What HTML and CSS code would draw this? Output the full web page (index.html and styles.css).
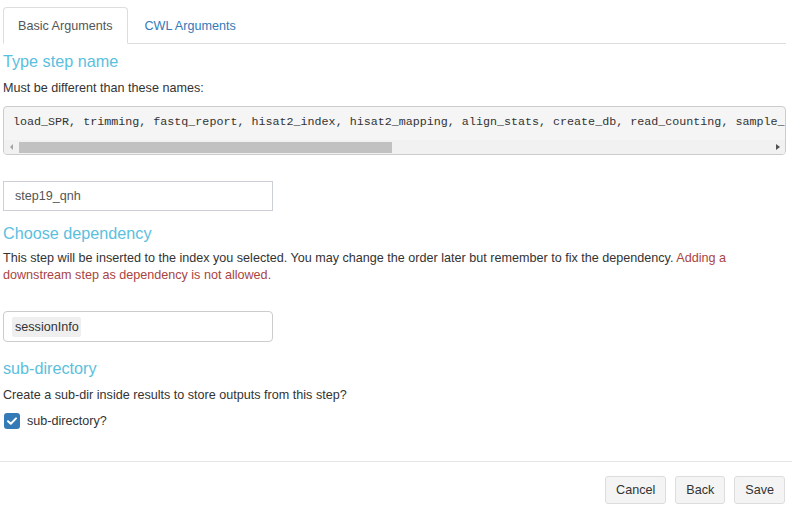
FILE: index.html
```html
<!DOCTYPE html>
<html>
<head>
<meta charset="utf-8">
<link rel="stylesheet" href="styles.css">
</head>
<body>
<div class="content">
  <ul class="tabs">
    <li class="tab active">Basic Arguments</li>
    <li class="tab">CWL Arguments</li>
  </ul>
  <h4 class="heading h-first">Type step name</h4>
  <p class="text">Must be different than these names:</p>
  <div class="pre-box">
    <pre class="names">load_SPR, trimming, fastq_report, hisat2_index, hisat2_mapping, align_stats, create_db, read_counting, sample_tree, run_edgeR, custom_step, sessionInfo</pre>
    <div class="hscroll">
      <span class="sb-btn"><span class="tri-left"></span></span>
      <span class="sb-track"><span class="sb-thumb" style="width:373px"></span></span>
      <span class="sb-btn"><span class="tri-right"></span></span>
    </div>
  </div>
  <div class="input">step19_qnh</div>
  <h4 class="heading h-dep">Choose dependency</h4>
  <p class="text two">This step will be inserted to the index you selected. You may change the order later but remember to fix the dependency. <span class="danger">Adding a downstream step as dependency is not allowed.</span></p>
  <div class="select"><span class="chip">sessionInfo</span></div>
  <h4 class="heading h-sub">sub-directory</h4>
  <p class="text">Create a sub-dir inside results to store outputs from this step?</p>
  <label class="check">
    <span class="box"><svg width="10" height="8" viewBox="0 0 10 8"><path d="M1 4.2 L3.8 6.8 L9 1.4" fill="none" stroke="#fff" stroke-width="2" stroke-linecap="round" stroke-linejoin="round"/></svg></span>
    <span class="check-label">sub-directory?</span>
  </label>
</div>
<div class="footer">
  <button class="btn">Cancel</button>
  <button class="btn">Back</button>
  <button class="btn">Save</button>
</div>
</body>
</html>
```
FILE: styles.css
```css
html, body {
  margin: 0;
  padding: 0;
  background: #fff;
}
body {
  font-family: "Liberation Sans", Arial, sans-serif;
  font-size: 12.6px;
  color: #333;
  width: 792px;
  height: 515px;
  overflow: hidden;
}
.content {
  padding: 0 6px 0 3px;
}
.tabs {
  list-style: none;
  margin: 7px 0 0;
  padding: 0;
  display: flex;
  border-bottom: 1px solid #ddd;
}
.tab {
  padding: 9px 14px 8px;
  line-height: 18px;
  margin-right: 2px;
  margin-bottom: -1px;
  border: 1px solid transparent;
  border-radius: 4px 4px 0 0;
  color: #337ab7;
}
.tab.active {
  color: #555;
  background: #fff;
  border-color: #ddd;
  border-bottom-color: transparent;
}
.heading {
  margin: 0 0 7px;
  font-size: 16.2px;
  font-weight: normal;
  line-height: 19px;
  color: #5bc0de;
}
.h-first { margin-top: 8px; margin-bottom: 9px; }
.h-dep { margin-top: 13px; }
.h-sub { margin-top: 17px; margin-bottom: 9px; }
.text {
  margin: 0 0 9px;
  line-height: 17px;
}
.text.two { margin-bottom: 27px; }
.danger { color: #a94442; }
.pre-box {
  border: 1px solid #ccc;
  border-radius: 4px;
  background: #f5f5f5;
  overflow: hidden;
  margin-top: 1px;
}
.names {
  margin: 0;
  padding: 7px 9px 9px;
  font-family: "Liberation Mono", "Courier New", monospace;
  font-size: 11.7px;
  line-height: 17px;
  color: #333;
  white-space: pre;
  overflow: hidden;
}
.hscroll {
  display: flex;
  align-items: center;
  height: 14px;
  background: #f1f1f1;
}
.sb-btn {
  width: 15px;
  height: 14px;
  display: flex;
  align-items: center;
  justify-content: center;
}
.tri-left {
  width: 0; height: 0;
  border-top: 3px solid transparent;
  border-bottom: 3px solid transparent;
  border-right: 3px solid #a3a3a3;
}
.tri-right {
  width: 0; height: 0;
  border-top: 3.5px solid transparent;
  border-bottom: 3.5px solid transparent;
  border-left: 4px solid #505050;
}
.sb-track {
  flex: 1;
  height: 11px;
  display: flex;
}
.sb-thumb {
  background: #c1c1c1;
  height: 11px;
}
.input {
  margin-top: 26px;
  width: 257px;
  height: 28px;
  line-height: 28px;
  padding: 0 0 0 11px;
  border: 1px solid #ccd0d6;
  color: #555;
}
.select {
  width: 252px;
  height: 21px;
  padding: 4px 8px;
  border: 1px solid #ccc;
  border-radius: 4px;
  display: flex;
  align-items: center;
}
.chip {
  background: #efefef;
  border-radius: 2px;
  padding: 0 2px 0 3px;
  line-height: 20px;
  color: #333;
}
.check {
  display: flex;
  align-items: center;
  margin: 9px 0 0 1px;
  height: 16px;
}
.box {
  width: 16px;
  height: 16px;
  border-radius: 3px;
  background: #337ab7;
  display: flex;
  align-items: center;
  justify-content: center;
  margin-right: 7px;
}
.check-label {
  line-height: 17px;
}
.footer {
  margin-top: 32px;
  border-top: 1px solid #e5e5e5;
  padding: 14px 7px 0 0;
  display: flex;
  justify-content: flex-end;
  gap: 9px;
}
.btn {
  font-family: "Liberation Sans", Arial, sans-serif;
  font-size: 12.6px;
  color: #333;
  background: #f4f4f4;
  border: 1px solid #ddd;
  border-radius: 3px;
  padding: 4px 10px;
  line-height: 18px;
  height: 28px;
}
```
